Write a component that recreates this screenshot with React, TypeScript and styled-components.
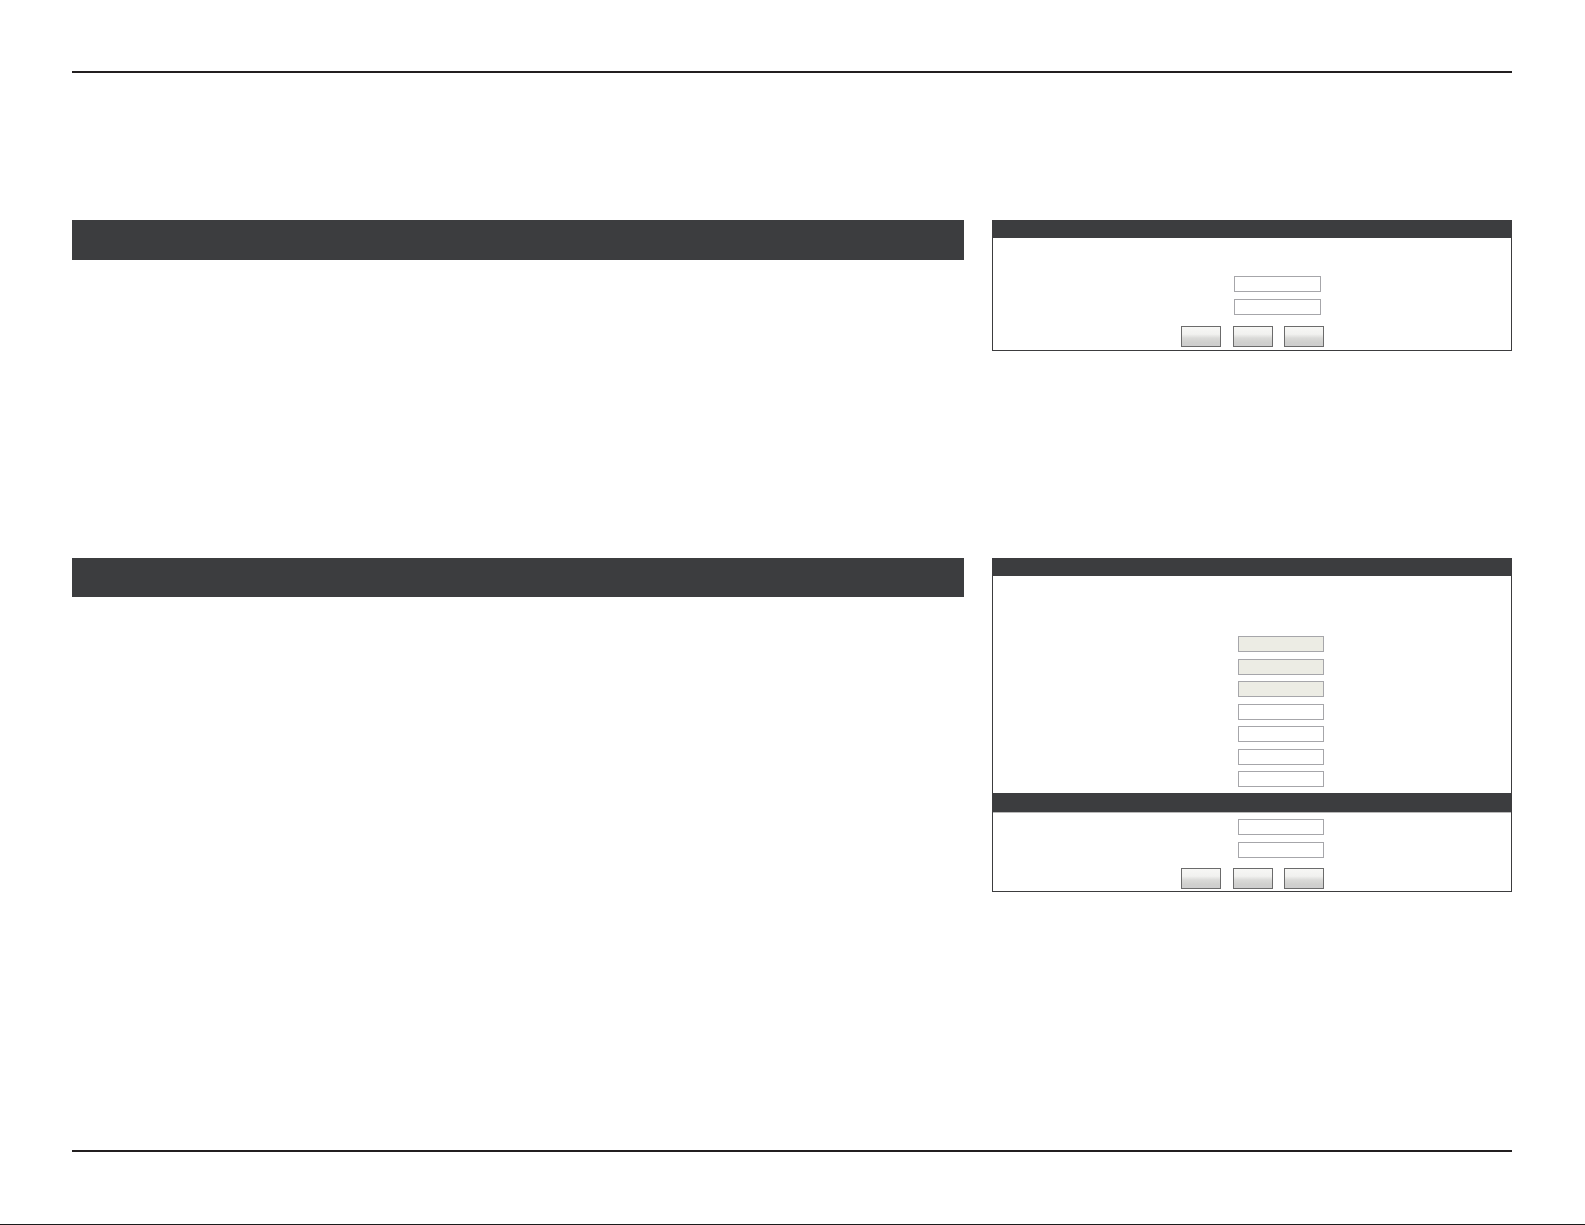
import styled, { createGlobalStyle } from 'styled-components';

const GlobalStyle = createGlobalStyle`
  html,
  body {
    margin: 0;
    padding: 0;
    background: #ffffff;
    font-family: 'Liberation Sans', Arial, sans-serif;
  }
  * {
    box-sizing: border-box;
  }
`;

const Page = styled.div`
  width: 1585px;
  height: 1225px;
  display: flex;
  flex-direction: column;
  background: #ffffff;
`;

const Content = styled.div`
  padding: 0 73px 0 72px;
  display: flex;
  flex-direction: column;
`;

const Rule = styled.div<{ $top: number }>`
  margin-top: ${props => props.$top}px;
  height: 2px;
  background: #231f20;
`;

const Section = styled.section<{ $top: number }>`
  margin-top: ${props => props.$top}px;
  display: grid;
  grid-template-columns: 892px 520px;
  column-gap: 28px;
  align-items: start;
`;

const SectionBar = styled.div<{ $height: number }>`
  height: ${props => props.$height}px;
  background: #3c3d3f;
`;

const Panel = styled.div`
  border: 1px solid #3c3c3e;
  display: flex;
  flex-direction: column;
`;

const PanelHeader = styled.div`
  height: 17px;
  background: #3c3d3f;
`;

const SubHeader = styled.div`
  height: 20px;
  background: #3c3d3f;
  border-bottom: 1px solid #b8b8b8;
`;

const PanelBody = styled.div<{ $top: number; $bottom: number }>`
  padding: ${props => props.$top}px 0 ${props => props.$bottom}px;
  display: flex;
  flex-direction: column;
`;

const FieldList = styled.div<{ $indent: number; $gap: number }>`
  padding-left: ${props => props.$indent}px;
  display: flex;
  flex-direction: column;
  gap: ${props => props.$gap}px;
`;

const TextInput = styled.input<{ $width: number }>`
  width: ${props => props.$width}px;
  height: 16px;
  margin: 0;
  padding: 0 3px;
  border: 1px solid #a6a6aa;
  border-radius: 0;
  background: #ffffff;
  font: 11px 'Liberation Sans', Arial, sans-serif;
  outline: none;

  &:read-only {
    background: #ecece4;
  }
`;

const ButtonRow = styled.div<{ $top: number }>`
  margin-top: ${props => props.$top}px;
  padding-left: 188px;
  display: flex;
  gap: 11.5px;
`;

const PanelButton = styled.button`
  width: 40px;
  height: 21px;
  margin: 0;
  padding: 0;
  border: 1px solid #6b6b6b;
  border-radius: 0;
  background: linear-gradient(
    #f7f7f5 0%,
    #f1f1ef 38%,
    #dadad8 58%,
    #d0d0ce 80%,
    #cecece 100%
  );
  cursor: pointer;
`;

const PageEdge = styled.div`
  margin-top: auto;
  height: 1px;
  background: #1c1c1c;
`;

const Fields = ({
  count,
  readOnly = 0,
  indent,
  width,
  gap,
}: {
  count: number;
  readOnly?: number;
  indent: number;
  width: number;
  gap: number;
}) => (
  <FieldList $indent={indent} $gap={gap}>
    {Array.from({ length: count }, (_, i) => (
      <TextInput key={i} $width={width} readOnly={i < readOnly} defaultValue="" />
    ))}
  </FieldList>
);

const Actions = ({ top }: { top: number }) => (
  <ButtonRow $top={top}>
    <PanelButton type="button" />
    <PanelButton type="button" />
    <PanelButton type="button" />
  </ButtonRow>
);

const App = () => {
  return (
    <Page>
      <GlobalStyle />
      <Content>
        <Rule $top={71} />

        <Section $top={147}>
          <SectionBar $height={40} />
          <Panel>
            <PanelHeader />
            <PanelBody $top={38} $bottom={3}>
              <Fields count={2} indent={241} width={87} gap={7} />
              <Actions top={11} />
            </PanelBody>
          </Panel>
        </Section>

        <Section $top={207}>
          <SectionBar $height={39} />
          <Panel>
            <PanelHeader />
            <PanelBody $top={60} $bottom={6}>
              <Fields count={7} readOnly={3} indent={245} width={86} gap={6.5} />
            </PanelBody>
            <SubHeader />
            <PanelBody $top={6} $bottom={2}>
              <Fields count={2} indent={245} width={86} gap={7} />
              <Actions top={10} />
            </PanelBody>
          </Panel>
        </Section>

        <Rule $top={258} />
      </Content>
      <PageEdge />
    </Page>
  );
};

export default App;
